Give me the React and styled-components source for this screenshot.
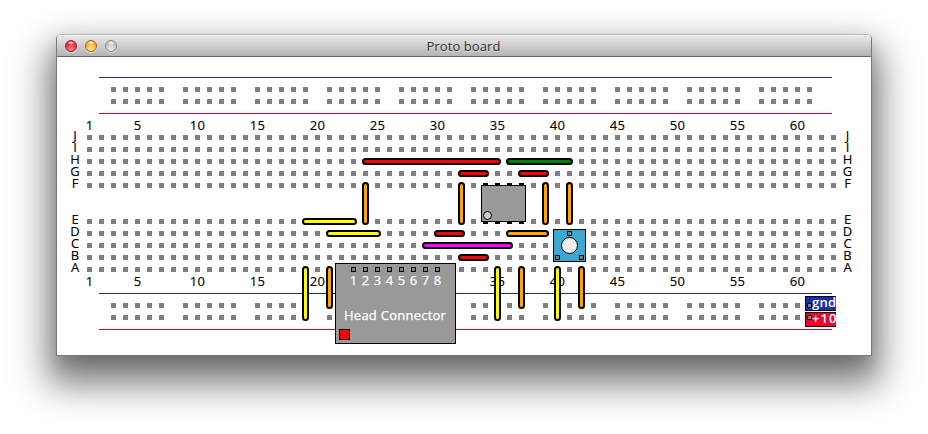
import React from "react";
import styled, { createGlobalStyle, css } from "styled-components";

const GlobalStyle = createGlobalStyle`
  body { margin: 0; background: #fff; overflow: hidden; }
  *, *::before, *::after { box-sizing: border-box; }
`;

/* Board geometry, relative to the window's content area. */
const PITCH = 12;
const colX = (col) => 30 + (col - 1) * PITCH;
const ROW_Y = { J: 78, I: 90, H: 102, G: 114, F: 126, E: 162, D: 174, C: 186, B: 198, A: 210, X: 246, Y: 258 };
const COLUMNS = Array.from({ length: 63 }, (_, i) => i + 1);

const COLORS = {
  red: "#ff0000",
  green: "#008000",
  orange: "#ffa500",
  yellow: "#ffff00",
  magenta: "#ff00ff",
};

const Desktop = styled.div`
  display: flex;
  width: 928px;
  height: 434px;
  padding: 34px 56px 0;
  overflow: hidden;
  background: #fff;
  font-family: "Open Sans", "Noto Sans", sans-serif;
  font-size: 13px;
  color: #000;
`;

const Window = styled.div`
  width: 816px;
  height: 322px;
  border: 1px solid #777;
  border-top-color: #b9b9b9;
  border-radius: 5px 5px 0 0;
  background: #fff;
  box-shadow: 0 20px 36px 8px rgba(0, 0, 0, 0.53), 0 9px 14px rgba(0, 0, 0, 0.1);
`;

const TitleBar = styled.header`
  display: grid;
  grid-template-columns: 1fr auto 1fr;
  align-items: center;
  height: 22px;
  padding: 0 9px 0 8px;
  border-bottom: 1px solid #686868;
  border-radius: 4px 4px 0 0;
  background: linear-gradient(#e9e9e9, #b4b4b4);
  box-shadow: inset 0 1px 0 #f3f3f3;
`;

const Title = styled.h1`
  margin: 0;
  font-size: 13px;
  font-weight: 400;
  line-height: 20px;
  letter-spacing: 0.1px;
  color: #303030;
  text-shadow: 0 1px 0 rgba(255, 255, 255, 0.5);
`;

const Lights = styled.div`
  display: flex;
  gap: 8px;
`;

const Light = styled.span`
  width: 12px;
  height: 12px;
  border: 1px solid ${(p) => p.$rim};
  border-radius: 50%;
  background: radial-gradient(ellipse 4px 2px at 50% 18%, rgba(255, 255, 255, 0.9), transparent),
    radial-gradient(circle at 50% 85%, ${(p) => p.$glow}, ${(p) => p.$tone} 70%);
  box-shadow: 0 1px 0 rgba(255, 255, 255, 0.5);
`;

const Board = styled.main`
  position: relative;
  height: 298px;
  padding-top: 20px;
`;

const Rail = styled.div`
  display: flex;
  flex-direction: column;
  gap: 7px;
  width: 733px;
  height: 37px;
  margin-left: 42px;
  padding: 9px 0 0 12px;
  border-top: 1px solid #1530ae;
  border-bottom: 1px solid #e4002e;
`;

const RailRow = styled.div`
  display: flex;
  gap: 19px;
`;

const HoleRun = styled.div`
  display: flex;
  gap: 7px;
`;

const Hole = styled.i`
  flex: none;
  width: 5px;
  height: 5px;
  background: #808080;
`;

const Scale = styled.div`
  display: grid;
  grid-template-columns: repeat(63, 12px);
  height: 21px;
  margin-left: 26.5px;
  line-height: ${(p) => (p.$lower ? 18 : 22)}px;
`;

const Tick = styled.span`
  display: flex;
  justify-content: center;
  letter-spacing: 0.2px;
  -webkit-text-stroke: 0.15px #000;
`;

const Strip = styled.div`
  display: grid;
  gap: 7px;
  margin-bottom: ${(p) => (p.$gap ? "31px" : 0)};
`;

const StripRow = styled.div`
  display: flex;
  height: 5px;
`;

const RowLetter = styled.span`
  width: 30px;
  padding: ${(p) => (p.$right ? "0 7px 0 0" : "0 0 0 6px")};
  text-align: center;
  line-height: 0;
  -webkit-text-stroke: 0.15px #000;
`;

const Wire = styled.div`
  position: absolute;
  left: ${(p) => colX(p.$col) - 1}px;
  top: ${(p) => ROW_Y[p.$row] - 1}px;
  width: ${(p) => (p.$toCol ? (p.$toCol - p.$col) * PITCH : 0) + 7}px;
  height: ${(p) => (p.$toRow ? ROW_Y[p.$toRow] - ROW_Y[p.$row] : 0) + 7}px;
  border: 2px solid #000;
  border-radius: 3.5px;
  background: ${(p) => COLORS[p.$color]};
`;

const part = css`
  position: absolute;
  border: 1px solid #000;
`;

const Chip = styled.div`
  ${part}
  left: 424px;
  top: 128px;
  width: 45px;
  height: 37px;
  background: #999;
`;

const ChipPins = styled.div`
  position: absolute;
  left: 1px;
  ${(p) => (p.$bottom ? "bottom: -3px" : "top: -3px")};
  display: flex;
  gap: 7px;
`;

const ChipPin = styled.i`
  width: 5px;
  height: 2px;
  background: #000;
`;

const ChipMark = styled.i`
  position: absolute;
  left: 1px;
  bottom: 1px;
  width: 9px;
  height: 9px;
  border: 1px solid #000;
  border-radius: 50%;
  background: #ccc;
`;

const Socket = styled.i`
  display: block;
  flex: none;
  width: 5px;
  height: 5px;
  border: 1px solid #000;
  background: #808080;
`;

const Pot = styled.div`
  ${part}
  left: 496px;
  top: 172px;
  width: 33px;
  height: 33px;
  padding: 1px;
  display: flex;
  flex-direction: column;
  align-items: center;
  gap: 1px;
  background: #3aa8d0;
`;

const Knob = styled.i`
  width: 17px;
  height: 17px;
  border: 1px solid #000;
  border-radius: 50%;
  background: #eee;
`;

const PotFeet = styled.div`
  display: flex;
  justify-content: space-between;
  width: 29px;
  padding: 0 0 0 0;
`;

const Connector = styled.div`
  ${part}
  left: 278px;
  top: 206px;
  width: 121px;
  height: 81px;
  padding: 3px;
  background: #999;
  color: #fff;
  -webkit-text-stroke: 0.25px #fff;
`;

const ConnectorPins = styled.div`
  display: grid;
  grid-template-columns: repeat(8, 12px);
  margin-left: 8.5px;
  justify-items: center;
  line-height: 17px;
`;

const ConnectorName = styled.div`
  margin: 16px 0 0 5px;
  line-height: 20px;
  letter-spacing: 0.25px;
  white-space: nowrap;
`;

const ConnectorKey = styled.i`
  display: block;
  width: 11px;
  height: 11px;
  margin-top: 4px;
  border: 1px solid #000;
  background: #f00;
`;

const Tag = styled.div`
  ${part}
  left: 748px;
  top: ${(p) => p.$top}px;
  width: 31px;
  height: 15px;
  display: flex;
  align-items: ${(p) => (p.$low ? "flex-end" : "flex-start")};
  padding: ${(p) => (p.$low ? "0 0 2px 1px" : "2px 0 0 1px")};
  border-right: 0;
  overflow: hidden;
  background: ${(p) => p.$tone};
  color: #fff;
  font-weight: 600;
  line-height: 13px;
  white-space: nowrap;
`;

const TagText = styled.span`
  align-self: flex-start;
  margin-top: ${(p) => p.$shift}px;
  letter-spacing: ${(p) => p.$track}px;
`;

const WIRES = [
  ["red", "H", 24, 35], ["green", "H", 36, 41],
  ["red", "G", 32, 34], ["red", "G", 37, 39],
  ["orange", "F", 24, 0, "E"], ["orange", "F", 32, 0, "E"],
  ["orange", "F", 39, 0, "E"], ["orange", "F", 41, 0, "E"],
  ["yellow", "E", 19, 23], ["yellow", "D", 21, 25],
  ["red", "D", 30, 32], ["orange", "D", 36, 39],
  ["magenta", "C", 29, 36], ["red", "B", 32, 34],
  ["yellow", "A", 19, 0, "Y"], ["orange", "A", 21, 0, "X"],
  ["yellow", "A", 35, 0, "Y"], ["orange", "A", 37, 0, "X"],
  ["yellow", "A", 40, 0, "Y"], ["orange", "A", 42, 0, "X"],
];

const PIN_NUMBERS = [1, 2, 3, 4, 5, 6, 7, 8];

function PowerRail() {
  return (
    <Rail>
      {[0, 1].map((r) => (
        <RailRow key={r}>
          {Array.from({ length: 10 }, (_, g) => (
            <HoleRun key={g}>
              {[0, 1, 2, 3, 4].map((h) => <Hole key={h} />)}
            </HoleRun>
          ))}
        </RailRow>
      ))}
    </Rail>
  );
}

/* The connector covers the lower numbers 25 and 30. */
function ColumnScale({ lower }) {
  const shown = (c) => (c === 1 || c % 5 === 0) && !(lower && (c === 25 || c === 30));
  return (
    <Scale $lower={lower}>
      {COLUMNS.map((c) => <Tick key={c}>{shown(c) ? c : ""}</Tick>)}
    </Scale>
  );
}

function TerminalStrip({ rows, gap }) {
  return (
    <Strip $gap={gap}>
      {rows.split("").map((row) => (
        <StripRow key={row}>
          <RowLetter>{row}</RowLetter>
          <HoleRun>{COLUMNS.map((c) => <Hole key={c} />)}</HoleRun>
          <RowLetter $right>{row}</RowLetter>
        </StripRow>
      ))}
    </Strip>
  );
}

function ChipPinRow({ bottom }) {
  return <ChipPins $bottom={bottom}>{[0, 1, 2, 3].map((n) => <ChipPin key={n} />)}</ChipPins>;
}

export default function App() {
  return (
    <>
      <GlobalStyle />
      <Desktop>
        <Window>
          <TitleBar>
            <Lights>
              <Light $rim="#9c2029" $tone="#e0202e" $glow="#ff8d8d" />
              <Light $rim="#a8681c" $tone="#f0a428" $glow="#fff08a" />
              <Light $rim="#858585" $tone="#c2c2c2" $glow="#ececec" />
            </Lights>
            <Title>Proto board</Title>
          </TitleBar>
          <Board>
            <PowerRail />
            <ColumnScale />
            <TerminalStrip rows="JIHGF" gap />
            <TerminalStrip rows="EDCBA" />
            <ColumnScale lower />
            <PowerRail />
            {WIRES.map(([color, row, col, toCol, toRow]) => (
              <Wire key={`${row}${col}`} $color={color} $row={row} $col={col} $toCol={toCol} $toRow={toRow} />
            ))}
            <Chip>
              <ChipPinRow />
              <ChipPinRow bottom />
              <ChipMark />
            </Chip>
            <Pot>
              <Socket />
              <Knob />
              <PotFeet><Socket /><Socket /></PotFeet>
            </Pot>
            <Connector>
              <ConnectorPins>
                {PIN_NUMBERS.map((n) => <Socket key={n} />)}
                {PIN_NUMBERS.map((n) => <span key={`n${n}`}>{n}</span>)}
              </ConnectorPins>
              <ConnectorName>Head Connector</ConnectorName>
              <ConnectorKey />
            </Connector>
            <Tag $top={239} $tone="#1530ae" $low>
              <Socket /><TagText $shift={-1} $track={0.3}>gnd</TagText>
            </Tag>
            <Tag $top={255} $tone="#ee0030">
              <Socket /><TagText $shift={-3} $track={1.1}>+10</TagText>
            </Tag>
          </Board>
        </Window>
      </Desktop>
    </>
  );
}
